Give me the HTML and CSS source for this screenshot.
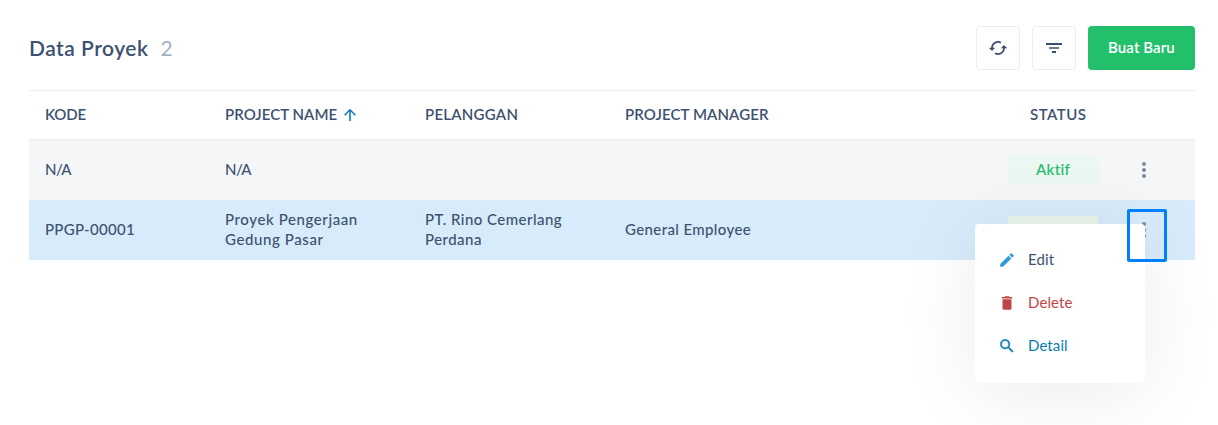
FILE: index.html
```html
<!DOCTYPE html>
<html lang="id">
<head>
<meta charset="utf-8">
<title>Data Proyek</title>
<link rel="stylesheet" href="styles.css">
</head>
<body>
<main class="page">
  <header class="toolbar">
    <h1 class="title">Data Proyek</h1><span class="count">2</span>
    <div class="actions">
      <button class="icon-btn" aria-label="Refresh"><svg width="20" height="20" viewBox="0 0 20 20" fill="none" stroke="currentColor" stroke-width="1.7"><path d="M4 11V10a6 6 0 0 1 9-5.200M16 9v1a6 6 0 0 1-9 5.200"/><path d="M.8 9.700h6.400L4 13.100zM12.800 10.300h6.400L16 6.900z" fill="currentColor" stroke="none"/></svg></button>
      <button class="icon-btn" aria-label="Filter"><svg width="18" height="18" viewBox="0 0 18 18" fill="currentColor"><path d="M1 4h16v2H1zM7 12h4v2H7z"/><path d="M4 8h10v2H4z" opacity=".75"/></svg></button>
      <button class="primary">Buat Baru</button>
    </div>
  </header>
  <section class="table">
    <div class="row head">
      <div><span class="text t-kode">KODE</span></div>
      <div class="sorted"><span class="text t-name">PROJECT NAME</span><svg width="14" height="14" viewBox="0 0 14 14" fill="none" stroke="currentColor" stroke-width="1.6"><path d="M7 13V2M1.600 7.200 7 1.800l5.400 5.400"/></svg></div>
      <div><span class="text t-client">PELANGGAN</span></div>
      <div><span class="text t-manager">PROJECT MANAGER</span></div>
      <div class="status-head"><span class="text">STATUS</span></div>
      <div></div>
    </div>
    <div class="row muted">
      <div><span class="text t-na">N/A</span></div><div><span class="text t-na">N/A</span></div><div></div><div></div>
      <div class="status"><span class="badge">Aktif</span></div>
      <div class="more"><svg width="6" height="18" viewBox="0 0 6 18" fill="currentColor"><circle cx="3" cy="3" r="2"/><circle cx="3" cy="9" r="2"/><circle cx="3" cy="15" r="2"/></svg></div>
    </div>
    <div class="row selected">
      <div><span class="text t-code">PPGP-00001</span></div>
      <div><span class="text">Proyek Pengerjaan<br>Gedung Pasar</span></div>
      <div><span class="text t-company">PT. Rino Cemerlang<br>Perdana</span></div>
      <div><span class="text t-person">General Employee</span></div>
      <div class="status"><span class="badge open">Aktif</span></div>
      <div class="more"><svg width="6" height="18" viewBox="0 0 6 18" fill="currentColor"><circle cx="3" cy="3" r="2"/><circle cx="3" cy="9" r="2"/><circle cx="3" cy="15" r="2"/></svg></div>
      <div class="menu">
        <div class="item edit"><svg width="18" height="18" viewBox="0 0 24 24" fill="currentColor"><path d="M3 17.250V21h3.750L17.810 9.940l-3.750-3.750zM20.710 7.040a1 1 0 0 0 0-1.410l-2.340-2.340a1 1 0 0 0-1.410 0l-1.830 1.830 3.750 3.750z"/></svg><span class="text">Edit</span></div>
        <div class="item delete"><svg width="18" height="18" viewBox="0 0 24 24" fill="currentColor"><path d="M6 19a2 2 0 0 0 2 2h8a2 2 0 0 0 2-2V7H6zM19 4h-3.500l-1-1h-5l-1 1H5v2h14z"/></svg><span class="text">Delete</span></div>
        <div class="item detail"><svg width="18" height="18" viewBox="0 0 24 24" fill="currentColor" stroke="currentColor" stroke-width=".4"><path d="M15.500 14h-.79l-.28-.27A6.500 6.500 0 1 0 13.730 14.430l.27.28v.79l5 4.990L20.490 19zM9.500 14a4.500 4.500 0 1 1 0-9 4.500 4.500 0 0 1 0 9z"/></svg><span class="text">Detail</span></div>
      </div>
      <div class="focus"></div>
    </div>
  </section>
</main>
</body>
</html>
```
FILE: styles.css
```css
* { box-sizing: border-box; }
body { margin: 0; height: 425px; overflow: hidden; background: #fff; color: #3d5170; font-family: Lato, "Open Sans", sans-serif; }
.page { padding: 26px 23px 0 29px; }
.toolbar { display: flex; align-items: center; height: 44px; margin-bottom: 20px; }
.title { margin: 0; padding-bottom: 2px; font-size: 21px; font-weight: 600; letter-spacing: .5px; }
.count { margin-left: 12px; padding-bottom: 2px; font-size: 21px; color: #a3b1c4; }
.actions { display: flex; gap: 12px; margin-left: auto; }
.icon-btn { display: flex; align-items: center; justify-content: center; width: 44px; height: 44px; padding: 0; border: 1px solid #ebecf0; border-radius: 4px; background: #fff; color: #3b4d70; }
.primary { width: 107px; height: 44px; padding: 0 0 2px; border: 0; border-radius: 4px; background: #22c06b; color: #fff; font: 600 15px Lato, sans-serif; letter-spacing: .1px; }
.row { position: relative; display: grid; grid-template-columns: 180px 200px 200px 383px 122px 1fr; align-items: center; height: 60px; padding-left: 16px; font-size: 15px; line-height: 20px; letter-spacing: .6px; font-weight: 500; }
.text { display: block; padding-bottom: 2px; }
.head { height: 50px; border-top: 1px solid #ebeef2; border-bottom: 1px solid #ebeef2; font-weight: 600; letter-spacing: .5px; }
.t-kode { letter-spacing: -.2px; }
.t-name { letter-spacing: .05px; }
.t-client { letter-spacing: .25px; }
.t-manager { letter-spacing: .1px; }
.t-na { letter-spacing: -.6px; }
.t-code { letter-spacing: .3px; }
.t-company { letter-spacing: .45px; }
.t-person { letter-spacing: .38px; }
.sorted { display: flex; align-items: center; gap: 6px; }
.sorted svg { color: #0b7db5; }
.muted { background: #f5f6f8; }
.selected { background: #d7ebfa; }
.status-head { padding-left: 22px; }
.badge { display: block; width: 90px; height: 28px; border-radius: 4px; background: #ebf8f2; color: #2abf70; text-align: center; line-height: 26px; font-weight: 600; letter-spacing: .3px; }
.open { background: #e9f5eb; }
.more { display: flex; padding-left: 11px; color: #7c899f; }
.menu { position: absolute; left: 946px; top: 24px; display: flex; flex-direction: column; width: 170px; height: 159px; padding: 14px 0; border-radius: 4px; background: #fff; box-shadow: 0 10px 80px rgba(0, 0, 0, .08); }
.item { display: flex; align-items: center; gap: 12px; height: 43px; padding-left: 23px; font-size: 15px; font-weight: 400; letter-spacing: .1px; }
.edit svg { color: #3398db; }
.delete { color: #bf4545; }
.detail { color: #087cad; }
.focus { position: absolute; left: 1098px; top: 9px; width: 40px; height: 53px; border: 3px solid #0080ff; border-radius: 2px; }
```
